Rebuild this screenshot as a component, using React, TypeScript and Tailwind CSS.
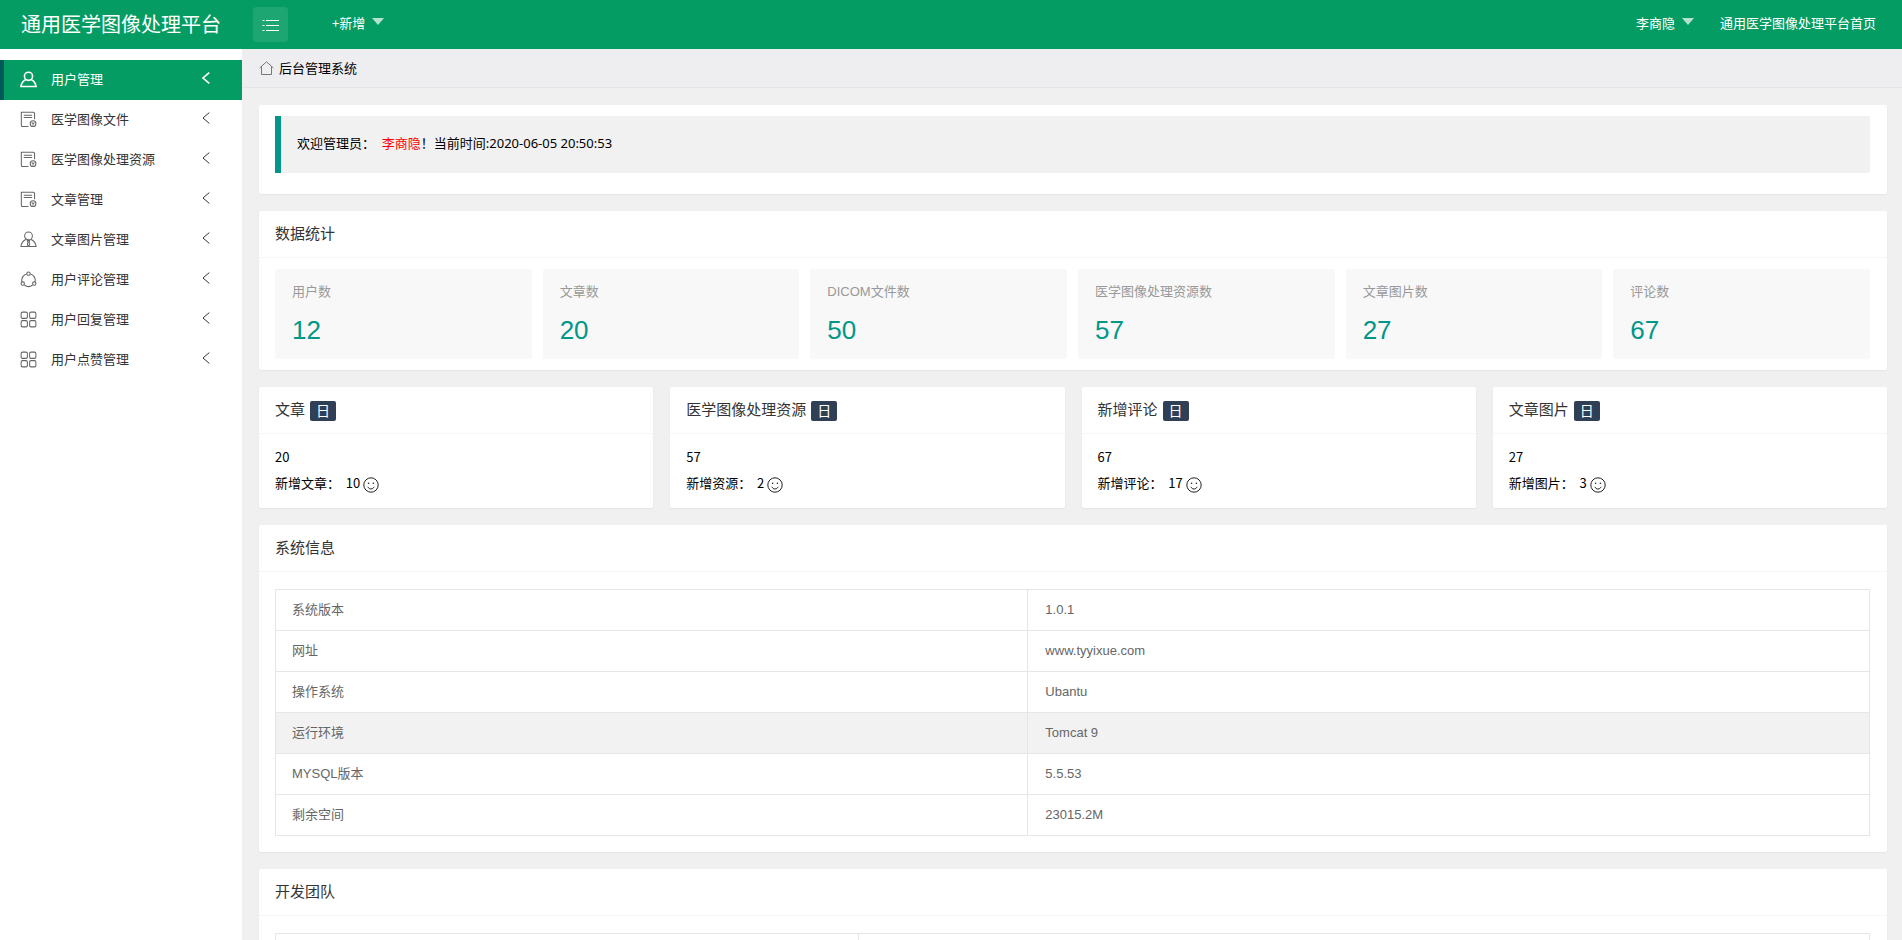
import React from "react";

const menus = [
  { icon: "user", label: "用户管理" },
  { icon: "form", label: "医学图像文件" },
  { icon: "form", label: "医学图像处理资源" },
  { icon: "form", label: "文章管理" },
  { icon: "member", label: "文章图片管理" },
  { icon: "share", label: "用户评论管理" },
  { icon: "app", label: "用户回复管理" },
  { icon: "app", label: "用户点赞管理" },
];

const stats = [
  { label: "用户数", value: 12 },
  { label: "文章数", value: 20 },
  { label: "DICOM文件数", value: 50 },
  { label: "医学图像处理资源数", value: 57 },
  { label: "文章图片数", value: 27 },
  { label: "评论数", value: 67 },
];

const daily = [
  { title: "文章", total: 20, label: "新增文章：", added: 10 },
  { title: "医学图像处理资源", total: 57, label: "新增资源：", added: 2 },
  { title: "新增评论", total: 67, label: "新增评论：", added: 17 },
  { title: "文章图片", total: 27, label: "新增图片：", added: 3 },
];

const systemInfo = [
  ["系统版本", "1.0.1"],
  ["网址", "www.tyyixue.com"],
  ["操作系统", "Ubantu"],
  ["运行环境", "Tomcat 9"],
  ["MYSQL版本", "5.5.53"],
  ["剩余空间", "23015.2M"],
];

const MenuIcon = ({ name }: { name: string }) => (
  <svg width="17" height="17" viewBox="0 0 18 18" fill="none" stroke="currentColor" strokeWidth={name === "user" ? 1.7 : 1.1}>
    {name === "user" && (
      <>
        <circle cx="9" cy="5.6" r="4.3" />
        <path d="M6.4 9C3.6 10.2 1.5 12.6 1 16.4h16C16.5 12.6 14.4 10.2 11.6 9" />
      </>
    )}
    {name === "form" && (
      <>
        <path d="M9 16.4H2.8a1.4 1.4 0 0 1-1.4-1.4V1.4h12.8a1.2 1.2 0 0 1 1.2 1.2v6.2" />
        <path d="M4 4.4h8.8M4 6.8h8.8" />
        <circle cx="13.8" cy="13.4" r="3" />
        <path d="M12.2 12.6h3.2M13.8 12.6v2.8" />
      </>
    )}
    {name === "member" && (
      <>
        <circle cx="9" cy="5.2" r="4.1" />
        <path d="M6.6 8.8C3.4 10.2 1.4 12.6 1 16.4h16c-.4-3.8-2.4-6.2-5.6-7.6" />
        <path d="M7.8 10.2h2.4L9.6 12l.6 2.4L9 16l-1.2-1.6.6-2.4z" />
      </>
    )}
    {name === "share" && (
      <>
        <path d="M7 3.1a6.8 6.8 0 0 0-4.9 8.3M11 3.1a6.8 6.8 0 0 1 4.9 8.3M4.6 14.8a7 7 0 0 0 8.8 0" />
        <circle cx="9" cy="2.8" r="1.8" />
        <circle cx="2.9" cy="13.3" r="1.8" />
        <circle cx="15.1" cy="13.3" r="1.8" />
      </>
    )}
    {name === "app" && (
      <>
        <rect x="1.2" y="1.2" width="6.6" height="6.6" rx="1.4" />
        <rect x="10.2" y="1.2" width="6.6" height="6.6" rx="1.4" />
        <rect x="1.2" y="10.2" width="6.6" height="6.6" rx="1.4" />
        <rect x="10.2" y="10.2" width="6.6" height="6.6" rx="1.4" />
      </>
    )}
  </svg>
);

const Caret = () => (
  <svg width="12" height="7" viewBox="0 0 12 7" className="mb-[2px]">
    <path d="M0 0h12L6 7z" fill="#fff" fillOpacity="0.7" />
  </svg>
);

const Smile = () => (
  <svg width="16" height="16" viewBox="0 0 16 16" fill="none" stroke="#222" className="mt-1">
    <circle cx="8" cy="8" r="7.2" />
    <path d="M4.8 9.8c.8 1.5 1.9 2.2 3.2 2.2s2.4-.7 3.2-2.2" />
    <circle cx="5.6" cy="6.2" r="0.8" fill="#222" stroke="none" />
    <circle cx="10.4" cy="6.2" r="0.8" fill="#222" stroke="none" />
  </svg>
);

const Card = ({ title, badge, children }: { title?: string; badge?: string; children: React.ReactNode }) => (
  <section className="bg-white rounded-xs shadow-[0_1px_2px_0_rgba(0,0,0,0.05)]">
    {title && (
      <h2 className="flex items-center gap-[5px] h-[47px] px-4 pb-[2px] border-b border-[#f6f6f6] text-[15px] text-[#333]">
        {title}
        {badge && (
          <span className="h-5 px-[6px] mt-1 rounded-xs bg-[#2f4056] text-white text-[14px] leading-[18px]">{badge}</span>
        )}
      </h2>
    )}
    {children}
  </section>
);

const App: React.FC = () => {
  return (
    <div className="flex flex-col h-screen overflow-hidden bg-[#f0f0f0] text-[13px] text-black font-['Noto_Sans_CJK_SC',sans-serif]">
      <header className="flex items-center shrink-0 h-[49px] pl-[21px] pr-[26px] bg-[#049c62] text-white">
        <h1 className="w-[232px] pb-[2px] text-[20px] leading-7">通用医学图像处理平台</h1>
        <button className="flex items-center justify-center w-[35px] h-[35px] rounded-sm bg-white/10" aria-label="切换菜单">
          <svg width="17" height="12" viewBox="0 0 17 12" stroke="#fff" strokeWidth="1.2">
            <path d="M4 1.5h13M4 6.5h13M4 11.5h13M.5 1.5h2M.5 6.5h2M.5 11.5h2" />
          </svg>
        </button>
        <button className="flex items-center gap-[7px] ml-11 pb-1">
          +新增 <Caret />
        </button>
        <button className="flex items-center gap-[7px] ml-auto pb-1">
          李商隐 <Caret />
        </button>
        <a href="#" className="ml-[26px] pb-1">
          通用医学图像处理平台首页
        </a>
      </header>

      <div className="flex flex-1 min-h-0">
        <nav className="w-[242px] shrink-0 pt-[11px] bg-white">
          {menus.map((m, i) => (
            <a
              key={m.label}
              href="#"
              className={
                i === 0
                  ? "flex items-center h-10 pl-4 pr-8 pb-[2px] border-l-4 border-[#00595a] bg-[#049c62] text-white"
                  : "flex items-center h-10 pl-5 pr-8 pb-[2px] text-[#333]"
              }
            >
              <span className={i === 0 ? "" : "text-[#666]"}>
                <MenuIcon name={m.icon} />
              </span>
              <span className="ml-[14px]">{m.label}</span>
              <svg width="8" height="12" viewBox="0 0 8 12" fill="none" stroke="currentColor" strokeWidth={i === 0 ? 1.6 : 1} className="ml-auto mb-[2px]">
                <path d="M7.3.6L1 6l6.3 5.4" />
              </svg>
            </a>
          ))}
        </nav>

        <main className="flex-1 min-w-0 overflow-y-auto [scrollbar-width:none]">
          <div className="flex items-center gap-[5px] h-[39px] pl-[17px] border-b border-[#e5e5e5] bg-[#eeeef0]">
            <svg width="15" height="14" viewBox="0 0 15 14" fill="none" stroke="#777">
              <path d="M.6 7L7.5.8 14.4 7M2.5 5.6v7.9h10V5.6" />
            </svg>
            <span>后台管理系统</span>
          </div>

          <div className="flex flex-col gap-[17px] pt-[17px] pl-[17px] pr-[15px] pb-4">
            <Card>
              <div className="pl-4 pr-[17px] pt-[11px] pb-[21px]">
                <blockquote className="h-[57px] px-4 pt-3 border-l-6 border-[#009688] rounded-r-xs bg-[#f1f1f1] leading-[30px] font-['Noto_Sans','Noto_Sans_CJK_SC',sans-serif]">
                  欢迎管理员：&nbsp; <span className="text-[#f00]">李商隐</span>！当前时间:2020-06-05 20:50:53
                </blockquote>
              </div>
            </Card>

            <Card title="数据统计">
              <div className="grid grid-cols-6 gap-[11px] pl-4 pr-[17px] py-[11px]">
                {stats.map((s) => (
                  <a key={s.label} href="#" className="h-[90px] px-[17px] pt-[11px] rounded-xs bg-[#f8f8f8] font-['Liberation_Sans','Noto_Sans_CJK_SC',sans-serif]">
                    <h3 className="leading-6 text-[#999]">{s.label}</h3>
                    <p className="pt-2 text-[26px] leading-9 text-[#009688]">{s.value}</p>
                  </a>
                ))}
              </div>
            </Card>

            <div className="grid grid-cols-4 gap-[17px]">
              {daily.map((d) => (
                <Card key={d.title} title={d.title} badge="日">
                  <div className="px-4 pt-[10px] pb-3 leading-[26px]">
                    <p>{d.total}</p>
                    <p className="flex items-center gap-[3px]">
                      <span>
                        {d.label}&nbsp; {d.added}
                      </span>
                      <Smile />
                    </p>
                  </div>
                </Card>
              ))}
            </div>

            <Card title="系统信息">
              <div className="pl-4 pr-[17px] pt-[17px] pb-4">
                <table className="w-full border-collapse text-[#666] font-['Liberation_Sans','Noto_Sans_CJK_SC',sans-serif]">
                  <tbody>
                    {systemInfo.map(([name, value], i) => (
                      <tr key={name} className={i === 3 ? "h-[41px] bg-[#f2f2f2]" : "h-[41px]"}>
                        <th className="w-[47.2%] px-4 border border-[#e6e6e6] text-left font-normal">{name}</th>
                        <td className="px-[17px] border border-[#e6e6e6]">{value}</td>
                      </tr>
                    ))}
                  </tbody>
                </table>
              </div>
            </Card>

            <Card title="开发团队">
              <div className="pl-4 pr-[17px] pt-[17px] pb-4">
                <table className="w-full border-collapse text-[#666]">
                  <tbody>
                    <tr className="h-[41px]">
                      <th className="w-[36.6%] px-4 border border-[#e6e6e6]"></th>
                      <td className="px-4 border border-[#e6e6e6]"></td>
                    </tr>
                  </tbody>
                </table>
              </div>
            </Card>
          </div>
        </main>
      </div>
    </div>
  );
};

export default App;
